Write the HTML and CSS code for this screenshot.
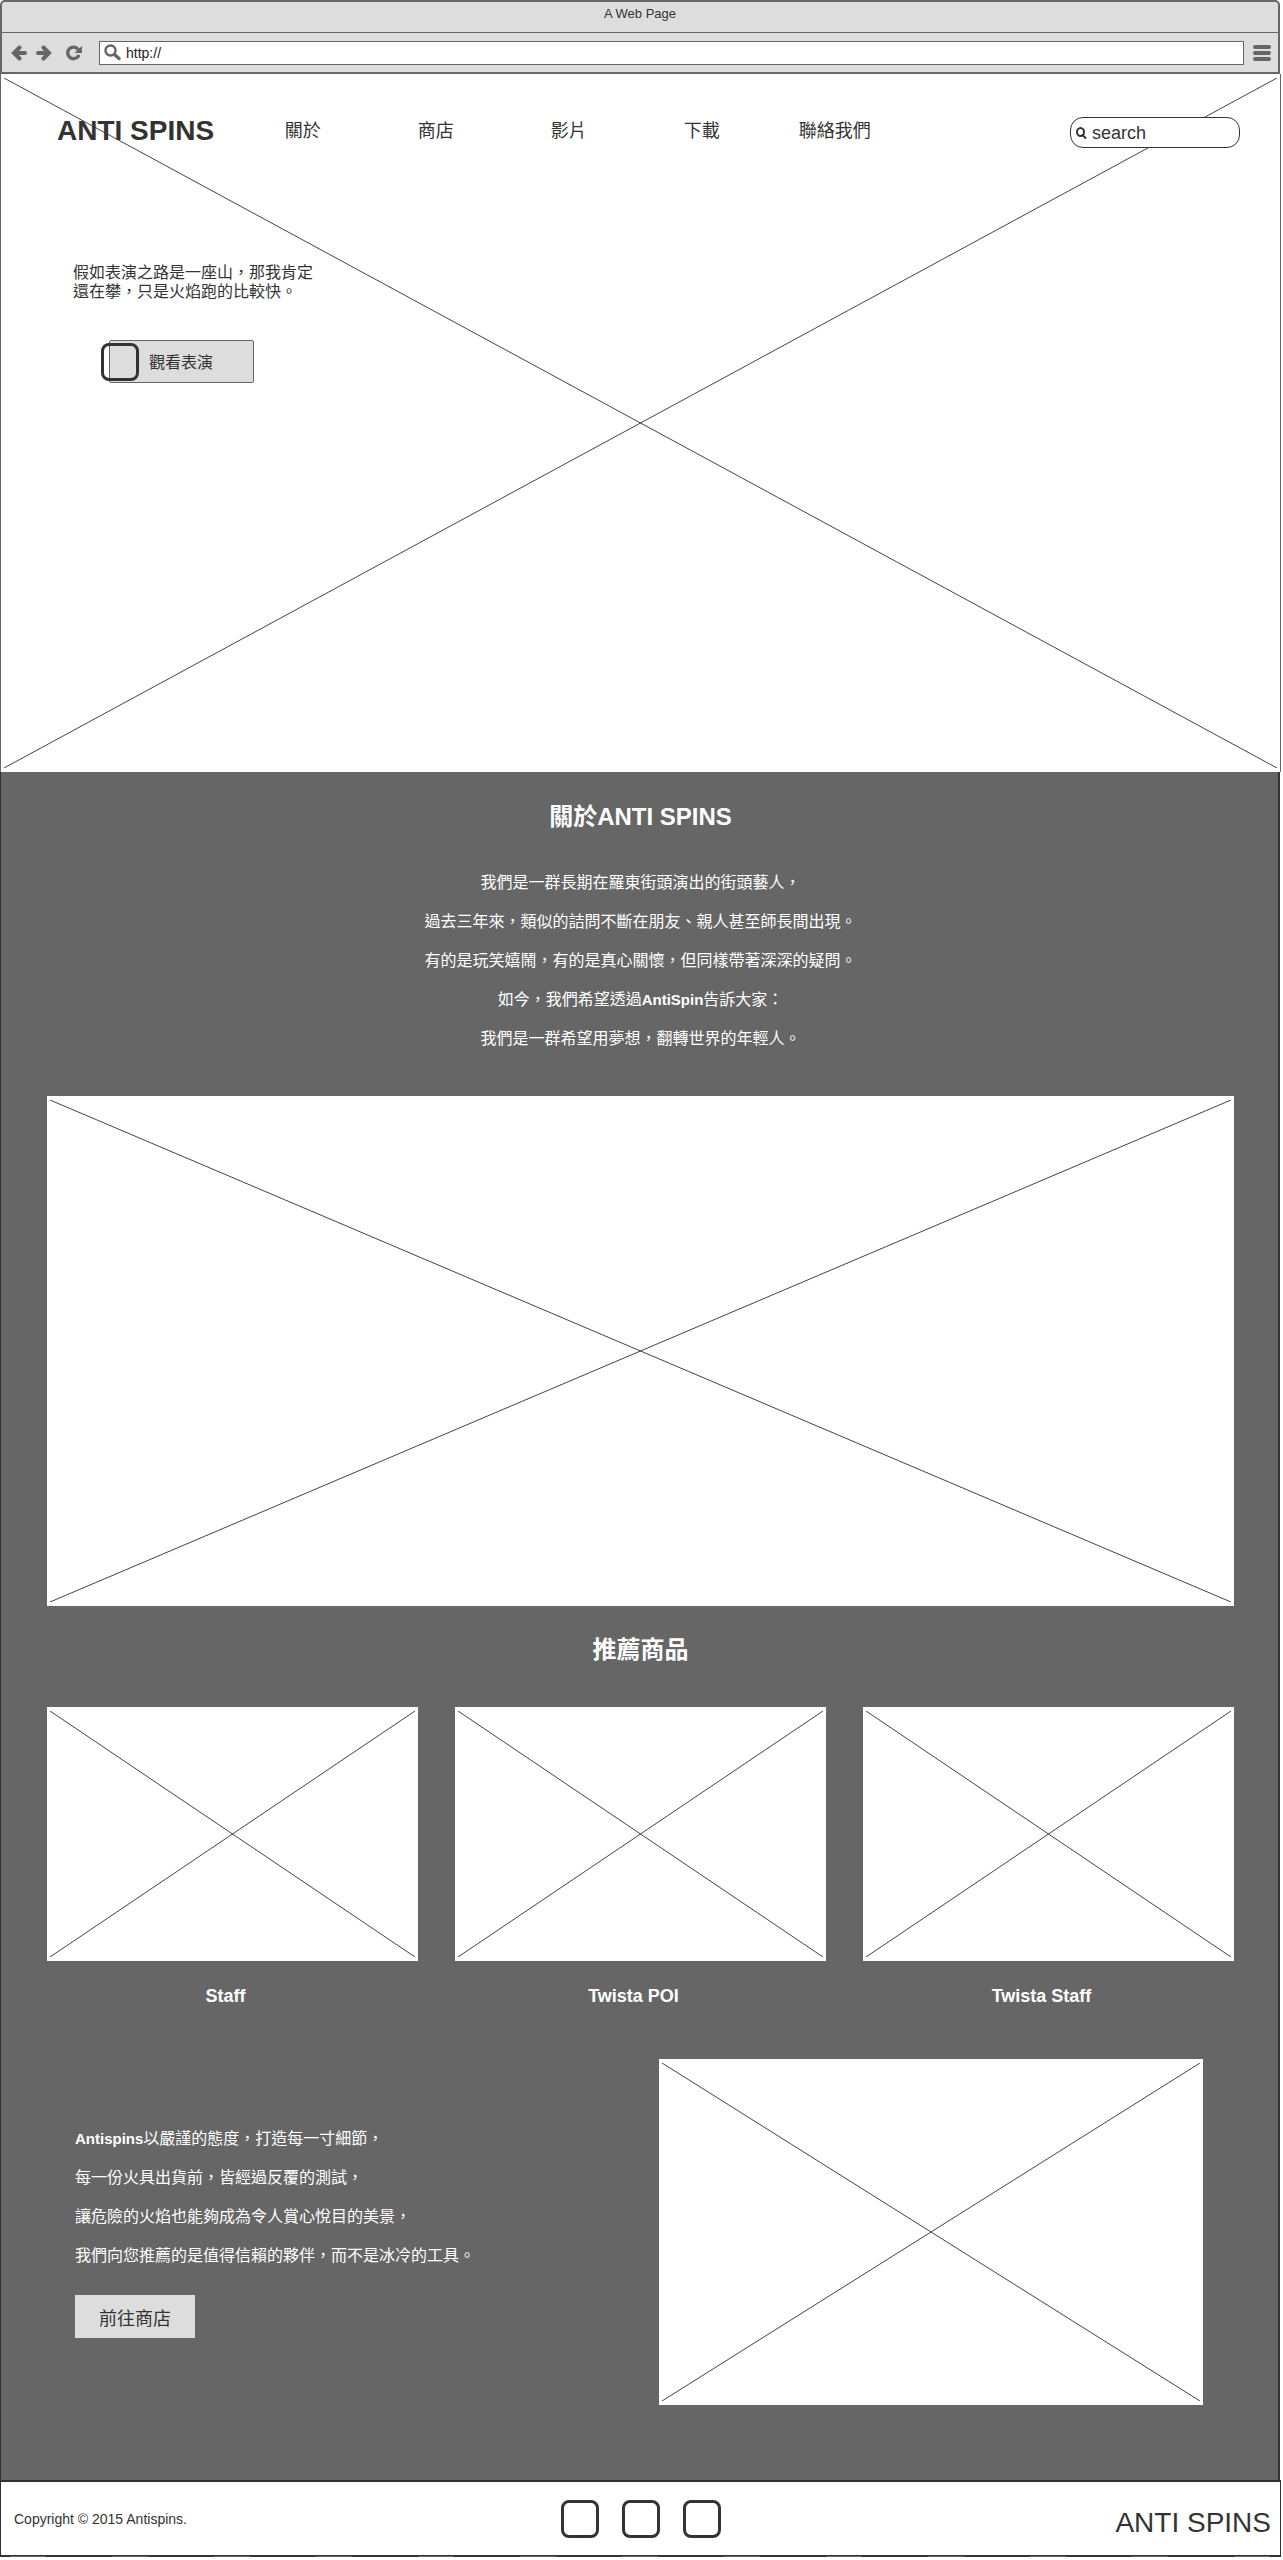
FILE: index.html
```html
<!DOCTYPE html>
<html lang="zh-Hant">
<head>
<meta charset="utf-8">
<meta name="viewport" content="width=device-width, initial-scale=1">
<title>A Web Page</title>
<link rel="stylesheet" href="styles.css">
</head>
<body>
<div class="window">
  <div class="chrome">
    <div class="chrome-title">A Web Page</div>
    <div class="toolbar">
      <button class="tool" type="button" aria-label="Back">
        <svg width="16" height="16" viewBox="0 0 16 16"><path d="M8.500 2.500 3 8l5.500 5.500M3.500 8H14" fill="none" stroke="currentColor" stroke-width="4" stroke-linecap="round" stroke-linejoin="miter"/></svg>
      </button>
      <button class="tool" type="button" aria-label="Forward">
        <svg width="16" height="16" viewBox="0 0 16 16"><path d="M7.500 2.500 13 8l-5.500 5.500M12.500 8H2" fill="none" stroke="currentColor" stroke-width="4" stroke-linecap="round" stroke-linejoin="miter"/></svg>
      </button>
      <button class="tool tool-reload" type="button" aria-label="Reload">
        <svg width="16" height="16" viewBox="0 0 16 16"><path d="M12.300 11.200A5.800 5.800 0 1 1 12 4.200" fill="none" stroke="currentColor" stroke-width="3.400" stroke-linecap="round"/><path d="M16 1v7H8.500z" fill="currentColor"/></svg>
      </button>
      <label class="address">
        <svg width="17" height="17" viewBox="0 0 17 17"><circle cx="6.500" cy="6.500" r="5" fill="none" stroke="currentColor" stroke-width="2.400"/><path d="m10.500 10.500 4.500 4" stroke="currentColor" stroke-width="3.400" stroke-linecap="round"/></svg>
        <input class="address-input" type="text" value="http://" aria-label="Address">
      </label>
      <button class="tool tool-menu" type="button" aria-label="Menu">
        <svg width="18" height="16" viewBox="0 0 18 16"><path d="M2 2h14M2 8h14M2 14h14" stroke="currentColor" stroke-width="4" stroke-linecap="round"/></svg>
      </button>
    </div>
  </div>

  <header class="hero">
    <svg class="cross" aria-hidden="true"><line x1="0" y1="0" x2="100%" y2="100%"/><line x1="100%" y1="0" x2="0" y2="100%"/></svg>
    <div class="topbar">
      <a class="logo" href="#">ANTI SPINS</a>
      <nav class="nav">
        <a href="#about">關於</a>
        <a href="#shop">商店</a>
        <a href="#video">影片</a>
        <a href="#download">下載</a>
        <a href="#contact">聯絡我們</a>
      </nav>
      <label class="search">
        <svg width="11" height="12" viewBox="0 0 11 12"><ellipse cx="4.500" cy="5" rx="3.500" ry="4" fill="none" stroke="currentColor" stroke-width="2"/><path d="m6.500 8 3 3" stroke="currentColor" stroke-width="2" stroke-linecap="round"/></svg>
        <input class="search-input" type="text" placeholder="search" aria-label="search">
      </label>
    </div>
    <div class="pitch">
      <p class="pitch-text">假如表演之路是一座山，那我肯定還在攀，只是火焰跑的比較快。</p>
      <button class="button watch" type="button"><span class="box watch-box"></span>觀看表演</button>
    </div>
  </header>

  <main class="content">
    <section class="about" id="about">
      <h2 class="heading">關於ANTI SPINS</h2>
      <div class="copy">
        <p>我們是一群長期在羅東街頭演出的街頭藝人，</p>
        <p>過去三年來，類似的詰問不斷在朋友、親人甚至師長間出現。</p>
        <p>有的是玩笑嬉鬧，有的是真心關懷，但同樣帶著深深的疑問。</p>
        <p>如今，我們希望透過<b>AntiSpin</b>告訴大家：</p>
        <p>我們是一群希望用夢想，翻轉世界的年輕人。</p>
      </div>
      <div class="picture picture-wide" id="video"><svg class="cross" aria-hidden="true"><line x1="0" y1="0" x2="100%" y2="100%"/><line x1="100%" y1="0" x2="0" y2="100%"/></svg></div>
    </section>

    <section class="products" id="shop">
      <h2 class="heading">推薦商品</h2>
      <div class="cards">
        <figure class="card">
          <div class="picture picture-card"><svg class="cross" aria-hidden="true"><line x1="0" y1="0" x2="100%" y2="100%"/><line x1="100%" y1="0" x2="0" y2="100%"/></svg></div>
          <figcaption>Staff</figcaption>
        </figure>
        <figure class="card">
          <div class="picture picture-card"><svg class="cross" aria-hidden="true"><line x1="0" y1="0" x2="100%" y2="100%"/><line x1="100%" y1="0" x2="0" y2="100%"/></svg></div>
          <figcaption>Twista POI</figcaption>
        </figure>
        <figure class="card">
          <div class="picture picture-card"><svg class="cross" aria-hidden="true"><line x1="0" y1="0" x2="100%" y2="100%"/><line x1="100%" y1="0" x2="0" y2="100%"/></svg></div>
          <figcaption>Twista Staff</figcaption>
        </figure>
      </div>
    </section>

    <section class="feature">
      <div class="feature-text">
        <div class="copy copy-left">
          <p><b>Antispins</b>以嚴謹的態度，打造每一寸細節，</p>
          <p>每一份火具出貨前，皆經過反覆的測試，</p>
          <p>讓危險的火焰也能夠成為令人賞心悅目的美景，</p>
          <p>我們向您推薦的是值得信賴的夥伴，而不是冰冷的工具。</p>
        </div>
        <button class="button shop-button" type="button">前往商店</button>
      </div>
      <div class="picture picture-feature"><svg class="cross" aria-hidden="true"><line x1="0" y1="0" x2="100%" y2="100%"/><line x1="100%" y1="0" x2="0" y2="100%"/></svg></div>
    </section>
  </main>

  <footer class="footer" id="contact">
    <small class="copyright">Copyright © 2015 Antispins.</small>
    <div class="social">
      <a class="box" href="#" aria-label="Social link 1"></a>
      <a class="box" href="#" aria-label="Social link 2"></a>
      <a class="box" href="#" aria-label="Social link 3"></a>
    </div>
    <span class="footer-brand">ANTI SPINS</span>
  </footer>
  <div class="edge"></div>
</div>
</body>
</html>
```
FILE: styles.css
```css
:root {
  --ink: #333;
  --gray: #666;
  --panel: #ddd;
}

* { box-sizing: border-box; }

body {
  margin: 0;
  background: #fff;
  color: var(--ink);
  font-family: "Liberation Sans", "Noto Sans CJK TC", sans-serif;
  font-size: 16px;
}

p, h2, figure { margin: 0; }

a { color: inherit; text-decoration: none; }

button, input { font: inherit; color: inherit; }

.window { margin-right: 2px; }

/* Browser frame */
.chrome {
  margin-right: 1px;
  border: 2px solid var(--gray);
  border-radius: 5px 5px 0 0;
  background: var(--panel);
}

.chrome-title {
  height: 31px;
  border-bottom: 1px solid var(--gray);
  font-size: 13px;
  line-height: 24px;
  text-align: center;
}

.toolbar {
  display: flex;
  align-items: center;
  height: 39px;
  padding: 0 7px 0 9px;
  gap: 9px;
  color: var(--gray);
}

.tool {
  display: flex;
  padding: 0;
  border: 0;
  background: none;
}

.tool-reload { margin: 0 8px 0 5px; }

.address {
  display: flex;
  flex: 1;
  align-items: center;
  gap: 5px;
  height: 24px;
  padding-left: 4px;
  border: 1px solid var(--gray);
  background: #fff;
}

.address-input {
  flex: 1;
  min-width: 0;
  padding: 0;
  border: 0;
  outline: 0;
  background: none;
  color: #222;
  font-size: 14px;
}

/* Crossed picture placeholders */
.cross {
  position: absolute;
  inset: 4px 3px;
  width: calc(100% - 6px);
  height: calc(100% - 8px);
  stroke: #444;
  stroke-width: 1;
}

.picture {
  position: relative;
  background: #fff;
}

.picture-wide { aspect-ratio: 1187 / 510; }
.picture-card { aspect-ratio: 371 / 254; }
.picture-feature { aspect-ratio: 544 / 346; }

/* Hero */
.hero {
  position: relative;
  min-height: 698px;
  padding: 43px 40px 0 56px;
  border: solid var(--gray);
  border-width: 0 1px;
}

.topbar {
  position: relative;
  display: flex;
  align-items: flex-start;
  line-height: 28px;
}

.logo {
  font-size: 28px;
  font-weight: 700;
  white-space: nowrap;
}

.nav {
  display: grid;
  grid-template-columns: repeat(5, 1fr);
  flex: 0 1 665px;
  margin: 0 auto 0 22px;
  font-size: 18px;
  text-align: center;
}

.search {
  display: flex;
  align-items: center;
  gap: 5px;
  width: 170px;
  height: 31px;
  padding: 0 5px;
  border: 1px solid var(--ink);
  border-radius: 13px;
  background: #fff;
}

.search-input {
  flex: 1;
  min-width: 0;
  padding: 0;
  border: 0;
  outline: 0;
  background: none;
  font-size: 18px;
}

.search-input::placeholder { color: var(--ink); opacity: 1; }

.pitch {
  position: relative;
  max-width: 240px;
  margin: 115px 0 0 16px;
}

.pitch-text { line-height: 19px; }

.button {
  height: 43px;
  border: 0;
  background: var(--panel);
  color: var(--ink);
}

.watch {
  position: relative;
  display: block;
  width: 145px;
  margin: 39px 0 0 36px;
  padding: 0 0 2px 39px;
  border: 1px solid var(--gray);
  border-radius: 2px;
  text-align: left;
}

.box {
  width: 38px;
  height: 38px;
  border: 3px solid var(--ink);
  border-radius: 8px;
}

.watch-box {
  position: absolute;
  top: 2px;
  left: -9px;
}

/* Gray content area */
.content {
  margin-right: 1px;
  padding: 29px 44px 75px 46px;
  border: solid var(--ink);
  border-width: 0 2px 0 1px;
  background: var(--gray);
  color: #fff;
}

.heading {
  font-size: 24px;
  line-height: 32px;
  text-align: center;
}

.copy {
  margin: 30px 0 38px;
  line-height: 39px;
  text-align: center;
}

.copy b { font-size: 15px; }

.copy-left {
  margin: 0 0 20px;
  text-align: left;
}

.products { margin-top: 28px; }

.cards {
  display: grid;
  grid-template-columns: repeat(3, 1fr);
  gap: 37px;
  margin-top: 41px;
}

.card figcaption {
  margin-top: 23px;
  padding-right: 14px;
  font-size: 18px;
  font-weight: 700;
  line-height: 24px;
  text-align: center;
}

.feature {
  display: grid;
  grid-template-columns: 584fr 544fr;
  margin-top: 51px;
  padding: 0 31px 0 28px;
}

.feature-text { padding-top: 60px; }

.shop-button {
  width: 120px;
  font-size: 18px;
}

/* Footer */
.footer {
  display: grid;
  grid-template-columns: 1fr auto 1fr;
  align-items: center;
  height: 77px;
  padding: 0 9px;
  border: solid var(--ink);
  border-width: 2px 1px;
}

.copyright {
  padding-left: 4px;
  font-size: 14px;
}

.social {
  display: flex;
  gap: 23px;
}

.footer-brand {
  padding-top: 8px;
  font-size: 28px;
  text-align: right;
}

.edge {
  height: 1px;
  margin-top: -1px;
  background: repeating-linear-gradient(90deg, var(--gray) 0 36px, transparent 36px 102px) 10px 0;
}
```
